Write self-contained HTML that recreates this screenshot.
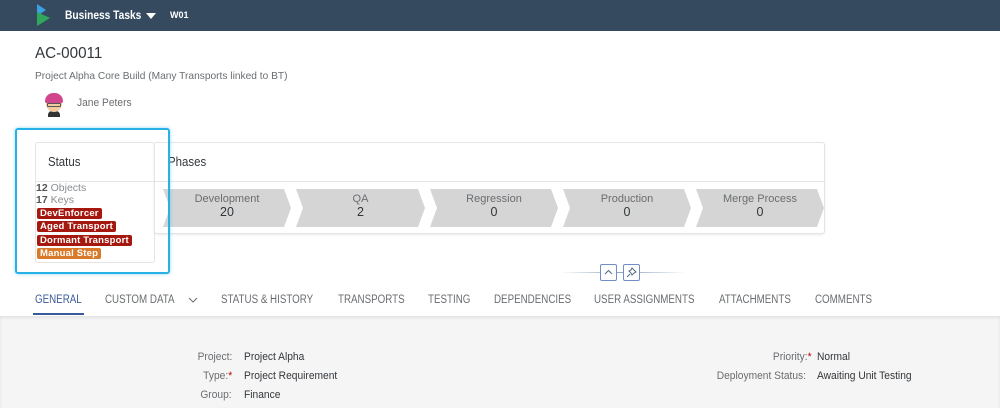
<!DOCTYPE html>
<html><head><meta charset="utf-8"><style>
*{margin:0;padding:0;box-sizing:border-box}
body{width:1000px;height:408px;overflow:hidden;background:#fff;font-family:"Liberation Sans",Arial,sans-serif;color:#32363a;position:relative}
.a{position:absolute;white-space:nowrap}
.sx{transform:scaleX(0.88);transform-origin:left top}
.hdr{left:0;top:0;width:1000px;height:31px;background:#354a5f}
.tag{position:absolute;left:37px;height:11px;font-size:9.5px;font-weight:bold;color:#fff;line-height:11px;padding:0 3px;border-radius:2px;background:#a5180f;letter-spacing:0.2px}
.tab{position:absolute;top:294px;font-size:11.5px;color:#6a6d70;transform:scaleX(0.85);transform-origin:left top}
.lbl{font-size:11px;color:#6a6d70;text-align:right;transform:scaleX(0.93);transform-origin:right top}
.val{font-size:11px;color:#32363a;transform:scaleX(0.93);transform-origin:left top}
.ch{position:absolute;top:189px;height:38px;background:#d5d5d5;clip-path:polygon(0 0,calc(100% - 7px) 0,100% 50%,calc(100% - 7px) 100%,0 100%,7px 50%);text-align:center;font-size:11px;color:#6a6d70;padding-top:4px;line-height:13px}
.ch b{display:block;font-weight:normal;color:#32363a;font-size:12.5px}
</style></head><body>
<div class="a hdr"></div>
<svg class="a" style="left:37px;top:4px" width="14" height="22" viewBox="0 0 14 22"><polygon points="0,0 9,6 0,12" fill="#3aa0e0"/><polygon points="0,8 13,14 0,22" fill="#2fa85c"/></svg>
<div class="a sx" style="left:65px;top:8px;font-size:12px;font-weight:bold;color:#fff;transform:scaleX(0.85)">Business Tasks</div>
<svg class="a" style="left:146px;top:13px" width="10" height="6"><polygon points="0,0 10,0 5,6" fill="#fff"/></svg>
<div class="a" style="left:170px;top:10px;font-size:9px;font-weight:bold;color:#fff">W01</div>

<div class="a sx" style="left:35px;top:45px;font-size:16px;transform:scaleX(0.95)">AC-00011</div>
<div class="a sx" style="left:35px;top:70px;font-size:10.5px;color:#6a6d70;transform:scaleX(0.97)">Project Alpha Core Build (Many Transports linked to BT)</div>
<div class="a" style="left:43px;top:92px;width:22px;height:25px">
<div class="a" style="left:5px;top:19px;width:12px;height:6px;background:#333;border-radius:4px 4px 0 0"></div>
<div class="a" style="left:3px;top:3px;width:16px;height:17px;background:#f2c9a0;border-radius:50%"></div>
<div class="a" style="left:2px;top:1px;width:18px;height:10px;background:#d0458c;border-radius:9px 9px 2px 2px"></div>
<div class="a" style="left:4px;top:11px;width:14px;height:4px;border:1px solid #555;border-radius:1px"></div>
</div>
<div class="a sx" style="left:77px;top:97px;font-size:11px;color:#6a6d70;transform:scaleX(0.93)">Jane Peters</div>

<div class="a" style="left:35px;top:142px;width:120px;height:121px;border:1px solid #e5e5e5;border-radius:3px;background:#fff"></div>
<div class="a" style="left:35px;top:181px;width:120px;border-top:1px solid #e5e5e5"></div>
<div class="a sx" style="left:48px;top:154px;font-size:13px">Status</div>
<div class="a" style="left:36px;top:182px;font-size:10.5px;color:#8a8d90"><b style="color:#555">12</b> Objects</div>
<div class="a" style="left:36px;top:194px;font-size:10.5px;color:#8a8d90"><b style="color:#555">17</b> Keys</div>
<div class="tag" style="top:208px">DevEnforcer</div>
<div class="tag" style="top:221px">Aged Transport</div>
<div class="tag" style="top:235px">Dormant Transport</div>
<div class="tag" style="top:248px;background:#d9792a">Manual Step</div>

<div class="a" style="left:154px;top:142px;width:671px;height:92px;border:1px solid #e5e5e5;border-radius:3px;background:#fff;box-shadow:0 1px 2px rgba(0,0,0,.08)"></div>
<div class="a" style="left:154px;top:181px;width:671px;border-top:1px solid #e5e5e5"></div>
<div class="a sx" style="left:168px;top:154px;font-size:13px">Phases</div>
<div class="ch" style="left:163px;width:128px">Development<b>20</b></div>
<div class="ch" style="left:296px;width:129px">QA<b>2</b></div>
<div class="ch" style="left:430px;width:128px">Regression<b>0</b></div>
<div class="ch" style="left:563px;width:128px">Production<b>0</b></div>
<div class="ch" style="left:696px;width:128px">Merge Process<b>0</b></div>

<div class="a" style="left:15px;top:128px;width:155px;height:146px;border:2px solid #27b1e6;border-radius:3px;box-shadow:0 0 3px rgba(39,177,230,.5)"></div>

<div class="a" style="left:560px;top:272px;width:126px;height:1px;background:linear-gradient(90deg,#fff,#8fa3c0,#fff)"></div>
<div class="a" style="left:600px;top:264px;width:17px;height:17px;border:1px solid #6f8ec5;border-radius:2px;background:#fff"></div>
<svg class="a" style="left:604px;top:269px" width="9" height="6"><polyline points="1,5 4.5,1.5 8,5" fill="none" stroke="#556b8a" stroke-width="1"/></svg>
<div class="a" style="left:623px;top:264px;width:17px;height:17px;border:1px solid #6f8ec5;border-radius:2px;background:#fff"></div>
<svg class="a" style="left:626px;top:267px" width="11" height="11"><path d="M6 1 L10 5 L8 6 L6 8 L5 6 L3 4 L5 3 Z M4 7 L1 10" fill="none" stroke="#556b8a" stroke-width="1"/></svg>

<div class="a" style="left:0;top:316px;width:1000px;height:92px;background:#f5f5f5;box-shadow:inset 0 2px 3px rgba(0,0,0,.08)"></div>
<div class="tab" style="left:35px;color:#3b5a9a">GENERAL</div>
<div class="a" style="left:33px;top:313px;width:51px;height:2px;background:#3b5a9a"></div>
<div class="tab" style="left:105px">CUSTOM DATA</div>
<svg class="a" style="left:188px;top:297px" width="10" height="6"><polyline points="1,1 5,5 9,1" fill="none" stroke="#6a6d70"/></svg>
<div class="tab" style="left:221px">STATUS &amp; HISTORY</div>
<div class="tab" style="left:338px">TRANSPORTS</div>
<div class="tab" style="left:428px">TESTING</div>
<div class="tab" style="left:494px">DEPENDENCIES</div>
<div class="tab" style="left:594px">USER ASSIGNMENTS</div>
<div class="tab" style="left:719px">ATTACHMENTS</div>
<div class="tab" style="left:815px">COMMENTS</div>

<div class="a lbl" style="right:768px;top:351px">Project:</div>
<div class="a lbl" style="right:768px;top:370px">Type:<span style="color:#bb0000">*</span></div>
<div class="a lbl" style="right:768px;top:389px">Group:</div>
<div class="a val" style="left:244px;top:351px">Project Alpha</div>
<div class="a val" style="left:244px;top:370px">Project Requirement</div>
<div class="a val" style="left:244px;top:389px">Finance</div>
<div class="a lbl" style="right:188px;top:351px">Priority:<span style="color:#bb0000">*</span></div>
<div class="a lbl" style="right:194px;top:370px">Deployment Status:</div>
<div class="a val" style="left:817px;top:351px">Normal</div>
<div class="a val" style="left:817px;top:370px">Awaiting Unit Testing</div>
</body></html>
